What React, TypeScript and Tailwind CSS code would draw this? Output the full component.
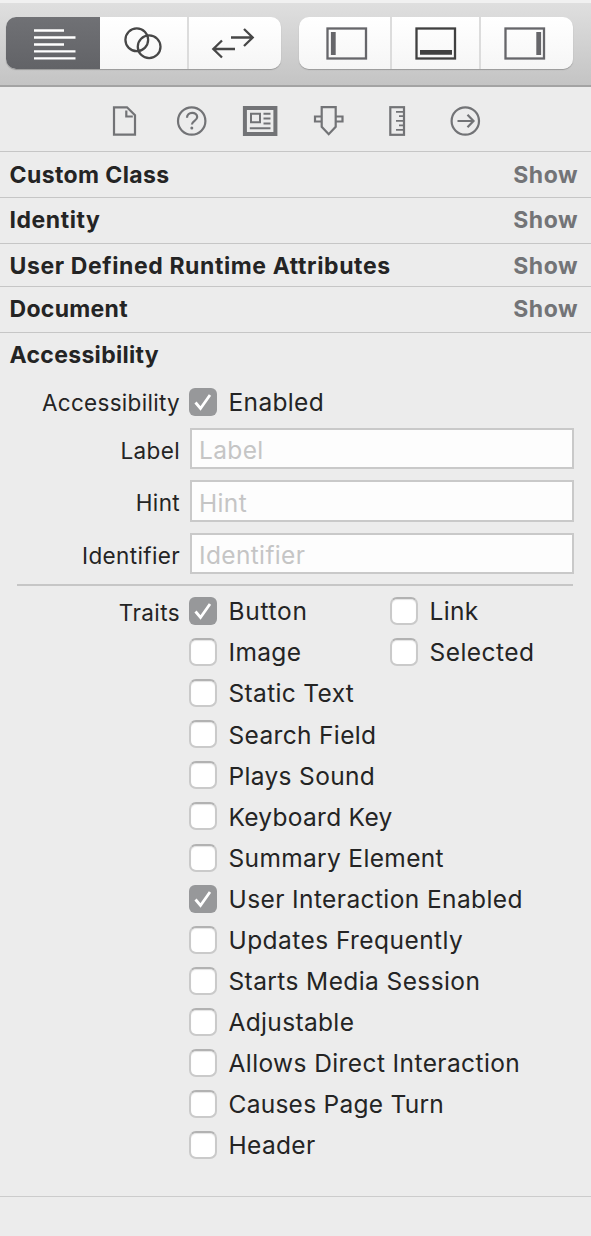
import type { ReactNode } from 'react';

function Segment({ box, className, children }: { box: string; className: string; children: ReactNode }) {
  return (
    <button className={`block h-full ${className}`}>
      <svg viewBox={box} className="block h-full w-full" fill="none" stroke="currentColor" strokeWidth={2.3}>
        {children}
      </svg>
    </button>
  );
}

function Toolbar() {
  return (
    <div className="flex h-[87px] border-t-[3px] border-b-2 border-t-[#f1f1f1] border-b-[#a3a3a3] bg-linear-to-b from-[#dfdfdf] to-[#c4c4c4] pt-[14px] pl-[6px]">
      <div className="flex h-[52px] w-[275px] overflow-hidden rounded-[10px] bg-linear-to-b from-white to-[#f6f6f6] text-[#474747] shadow-[0_1px_1px_#999]">
        <Segment box="6 17 94 52" className="w-[94px] bg-linear-to-b from-[#707175] to-[#626367] text-white">
          <path d="M34 30.5h30M34 37.5h41.5M34 44.5h30M34 51.3h41.5M34 58.3h41.5" />
        </Segment>
        <Segment box="101 17 88 52" className="w-[89px] border-r-2 border-[#dcdcdc]">
          <circle cx="138.2" cy="39.8" r="11.5" />
          <circle cx="150.7" cy="46.8" r="11.5" />
        </Segment>
        <Segment box="189 17 92 52" className="w-[92px]">
          <path d="M231 37.5h21.5M244 29l8.700 8.500-8.700 8.500M235 49h-21.500M222 40.500l-8.700 8.500 8.700 8.500" />
        </Segment>
      </div>
      <div className="ml-[18px] flex h-[52px] w-[274px] overflow-hidden rounded-[10px] bg-linear-to-b from-white to-[#f6f6f6] text-[#66666a] shadow-[0_1px_1px_#999]">
        <Segment box="299 17 91 52" className="w-[93px] border-r-2 border-[#dcdcdc]">
          <rect x="327.500" y="28.500" width="38.500" height="30" />
          <path d="M333.300 32v23" strokeWidth={4.8} />
        </Segment>
        <Segment box="392 17 87 52" className="w-[89px] border-r-2 border-[#dcdcdc] text-[#404040]">
          <rect x="416.500" y="28.500" width="38.500" height="30" />
          <path d="M420 52.300h32" strokeWidth={4.8} />
        </Segment>
        <Segment box="481 17 92 52" className="w-[92px]">
          <rect x="505.500" y="28.500" width="38.500" height="30" />
          <path d="M538.700 32v23" strokeWidth={4.8} />
        </Segment>
      </div>
    </div>
  );
}

function Tab({ box, children }: { box: string; children: ReactNode }) {
  return (
    <svg viewBox={box} className="h-[34px] w-[36px]" fill="none" stroke="currentColor" strokeWidth={2.2}>
      {children}
    </svg>
  );
}

function InspectorTabs() {
  return (
    <div className="flex h-[64px] items-center justify-center gap-[32.3px] pt-[4px] pr-[2px] text-[#727376]">
      <Tab box="106 104 36 34">
        <path d="M114 107.300h13l8 8v19.300h-21z" />
        <path d="M126.300 110.500v6h6.500" />
      </Tab>
      <Tab box="174 104 36 34">
        <circle cx="191.700" cy="121" r="13.700" />
        <path d="M187 117.800c0-6.600 10.200-6.300 10.200-.8 0 4-5.300 3.600-5.300 7.600" />
        <circle cx="191.800" cy="128" r="1.500" fill="currentColor" stroke="none" />
      </Tab>
      <Tab box="242 104 36 34">
        <rect x="244.900" y="108" width="30.500" height="26" strokeWidth={4} />
        <path d="M251 113.800h9v8.500h-9zM263.500 113.800h7M263.500 118.600h7M263.500 123.400h7M249.800 128.300h20.700" strokeWidth={2} />
      </Tab>
      <Tab box="311 104 36 34">
        <path d="M321.700 107.200h14v19.500l-7 7.500-7-7.500zM321 116.500h-6v5h6M336.500 116.500h6v5h-6" />
      </Tab>
      <Tab box="379 104 36 34">
        <rect x="390.300" y="107.200" width="13.700" height="27.600" />
        <path d="M396 111.800h8M399 116.200h5M396 120.800h8M399 125.300h5M396 129.800h8" strokeWidth={1.8} />
      </Tab>
      <Tab box="447 104 36 34">
        <circle cx="465.300" cy="121" r="13.700" />
        <path d="M457.500 121h15.500M467.500 114.800l6 6.200-6 6.200" />
      </Tab>
    </div>
  );
}

function SectionHeader({ title, className, track }: { title: string; className: string; track: string }) {
  return (
    <div className={`flex items-center justify-between border-t-[1.5px] border-[#c6c6c6] pr-[13px] pl-[9.5px] text-[23px] font-bold ${className}`}>
      <span className={track}>{title}</span>
      <span className="tracking-[0.5px] text-[#737477]">Show</span>
    </div>
  );
}

function Checkbox({ label, checked, className = '', track = 'tracking-[0.34px]' }: { label: string; checked?: boolean; className?: string; track?: string }) {
  return (
    <div className={`flex items-center ${className}`}>
      {checked ? (
        <span className="h-[28px] w-[28px] shrink-0 rounded-[6px] bg-[#97989a]">
          <svg viewBox="0 0 28 28" className="h-full w-full" fill="none" stroke="white" strokeWidth={2.8}>
            <path d="M6.500 14.500l5 6L21 7" />
          </svg>
        </span>
      ) : (
        <span className="h-[28px] w-[28px] shrink-0 rounded-[7px] border-2 border-[#cacaca] border-t-[#b2b2b2] bg-white shadow-[inset_0_1px_1px_#e4e4e4]" />
      )}
      <span className={`ml-[11.5px] pt-px text-[24.5px] whitespace-nowrap ${track}`}>{label}</span>
    </div>
  );
}

function Field({ name }: { name: string }) {
  return (
    <div className="flex h-[41.500px] items-center">
      <span className="mr-[10px] w-[180px] pt-[5px] text-right text-[22.500px] tracking-[0.35px]">{name}</span>
      <div className="flex h-full w-[384px] items-center border-2 border-[#c9c9c9] bg-[#fdfdfd] pt-[4px] pl-[7px] text-[24.5px] tracking-[0.35px] text-[#c5c5c5]">{name}</div>
    </div>
  );
}

const traits: { label: string; checked?: boolean; track?: string }[] = [
  { label: 'Static Text' },
  { label: 'Search Field' },
  { label: 'Plays Sound' },
  { label: 'Keyboard Key', track: 'tracking-[0.28px]' },
  { label: 'Summary Element' },
  { label: 'User Interaction Enabled', checked: true, track: 'tracking-[0.4px]' },
  { label: 'Updates Frequently', track: 'tracking-[0.44px]' },
  { label: 'Starts Media Session', track: 'tracking-[0.4px]' },
  { label: 'Adjustable' },
  { label: 'Allows Direct Interaction', track: 'tracking-[0.4px]' },
  { label: 'Causes Page Turn', track: 'tracking-[0.26px]' },
  { label: 'Header' },
];

export default function App() {
  return (
    <div className="flex h-[1236px] w-[591px] flex-col overflow-hidden bg-[#ececec] font-['Inter',sans-serif] leading-none text-[#242424]">
      <Toolbar />
      <InspectorTabs />
      <SectionHeader title="Custom Class" className="h-[46px] pt-px" track="tracking-[0.4px]" />
      <SectionHeader title="Identity" className="h-[45.500px] pt-px" track="tracking-[0.55px]" />
      <SectionHeader title="User Defined Runtime Attributes" className="h-[43.500px] pt-[3px]" track="tracking-[0.6px]" />
      <SectionHeader title="Document" className="h-[45.500px] pt-px" track="tracking-[0.3px]" />
      <div className="flex h-[46px] items-center border-t-[1.5px] border-[#c6c6c6] pl-[9.5px] text-[23px] font-bold tracking-[0.32px]">Accessibility</div>
      <div className="flex h-[50px] items-center pb-[2px]">
        <span className="mr-[9px] w-[180px] pt-[3px] text-right text-[22.500px] tracking-[0.3px]">Accessibility</span>
        <Checkbox label="Enabled" checked />
      </div>
      <div className="flex flex-col gap-[11px]">
        <Field name="Label" />
        <Field name="Hint" />
        <Field name="Identifier" />
      </div>
      <div className="mt-[10px] mr-[18px] ml-[17px] h-[1.500px] shrink-0 bg-[#c6c6c6]" />
      <div className="mt-[5px] flex h-[575px] shrink-0">
        <span className="mr-[9px] w-[180px] pt-[11px] text-right text-[22.500px] tracking-[0.4px]">Traits</span>
        <div className="flex flex-1 flex-col">
          <div className="flex flex-1">
            <Checkbox label="Button" checked className="w-[201px]" track="tracking-[0.7px]" />
            <Checkbox label="Link" />
          </div>
          <div className="flex flex-1">
            <Checkbox label="Image" className="w-[201px]" />
            <Checkbox label="Selected" track="tracking-[0.45px]" />
          </div>
          {traits.map((t) => (
            <Checkbox key={t.label} label={t.label} checked={t.checked} track={t.track} className="flex-1" />
          ))}
        </div>
      </div>
      <div className="mt-[30px] h-[1.500px] shrink-0 bg-[#cccccc]" />
    </div>
  );
}
